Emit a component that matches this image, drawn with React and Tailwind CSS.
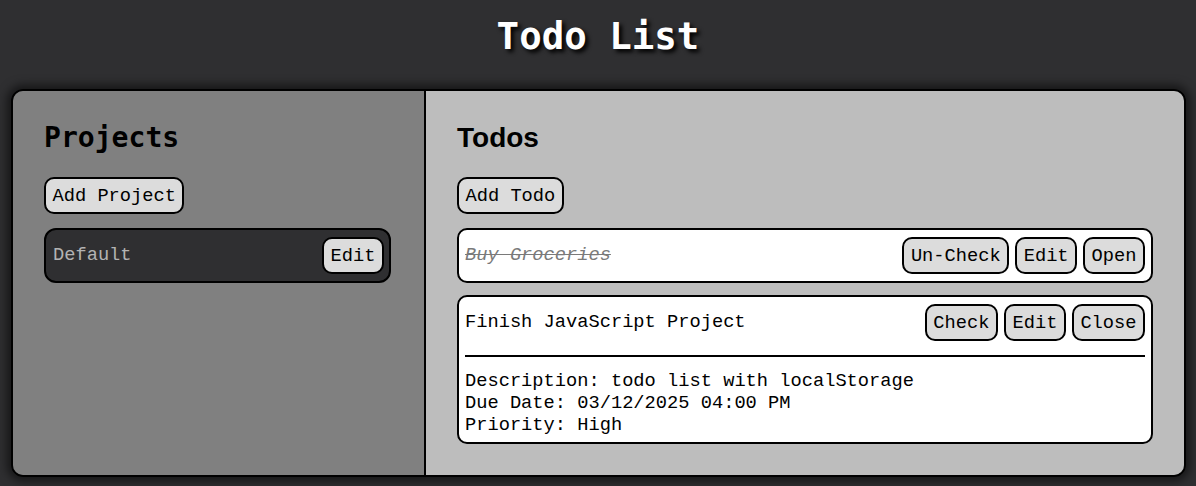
const MONO = "font-['Liberation_Mono',monospace]";
const HEAD = "font-['DejaVu_Sans_Mono',monospace]";

const Button = ({ children }) => (
  <button className="h-[37px] px-[6.5px] border-2 border-black rounded-[10px] bg-[#dcdcdc] text-black leading-[22px] whitespace-pre">
    {children}
  </button>
);

const todos = [
  { id: 1, title: 'Buy Groceries', done: true, open: false },
  {
    id: 2,
    title: 'Finish JavaScript Project',
    done: false,
    open: true,
    description: 'todo list with localStorage',
    due: '03/12/2025 04:00 PM',
    priority: 'High',
  },
];

const TodoItem = ({ todo }) => (
  <div className={`bg-white border-2 border-black rounded-[10px] px-[6px] pt-[7px] ${todo.open ? 'pb-[6px]' : 'pb-[7px]'}`}>
    <div className="flex items-center gap-[6px]">
      <span
        className={`flex-1 ${todo.done ? 'italic line-through text-[#7a7a7a]' : 'text-black'}`}
      >
        {todo.title}
      </span>
      <Button>{todo.done ? 'Un-Check' : 'Check'}</Button>
      <Button>Edit</Button>
      <Button>{todo.open ? 'Close' : 'Open'}</Button>
    </div>
    {todo.open && (
      <>
        <div className="mt-[14px] mb-[13px] h-[2px] bg-black"></div>
        <div className="leading-[22px] text-black">
          <p>Description: {todo.description}</p>
          <p>Due Date: {todo.due}</p>
          <p>Priority: {todo.priority}</p>
        </div>
      </>
    )}
  </div>
);

export default function App() {
  return (
    <div className={`min-h-[486px] bg-[#2f2f31] ${MONO} text-[18.72px] overflow-hidden`}>
      {/* Header */}
      <h1 className={`${HEAD} pt-[14px] h-[89px] text-center text-white font-bold text-[37.44px] leading-[44px] [text-shadow:3px_3px_4px_#000]`}>
        Todo List
      </h1>

      {/* Main */}
      <div className="ml-[11px] mr-[10px] h-[388px] flex border-2 border-black rounded-[12px] overflow-hidden shadow-[0_0_10px_4px_rgba(0,0,0,0.55)]">
        {/* Projects */}
        <div className="w-[413px] shrink-0 bg-[#808080] border-r-2 border-black pl-[31px] pr-[33px] pt-[30px]">
          <h2 className={`${HEAD} font-bold text-[28.08px] leading-[33px] text-black`}>Projects</h2>
          <div className="mt-[23px]">
            <Button>Add Project</Button>
          </div>
          <div className="mt-[14px] flex items-center justify-between bg-[#2f2f31] border-2 border-black rounded-[12px] pl-[7px] pr-[5px] py-[7px]">
            <span className="text-[#b3b3b3]">Default</span>
            <Button>Edit</Button>
          </div>
        </div>

        {/* Todos */}
        <div className="flex-1 bg-[#bdbdbd] px-[31px] pt-[30px]">
          <h2 className="font-['Liberation_Sans',Arial,sans-serif] font-bold text-[28px] leading-[33px] text-black">
            Todos
          </h2>
          <div className="mt-[23px]">
            <Button>Add Todo</Button>
          </div>
          <div className="mt-[14px] flex flex-col gap-[12px]">
            {todos.map((t) => (
              <TodoItem key={t.id} todo={t} />
            ))}
          </div>
        </div>
      </div>
    </div>
  );
}
